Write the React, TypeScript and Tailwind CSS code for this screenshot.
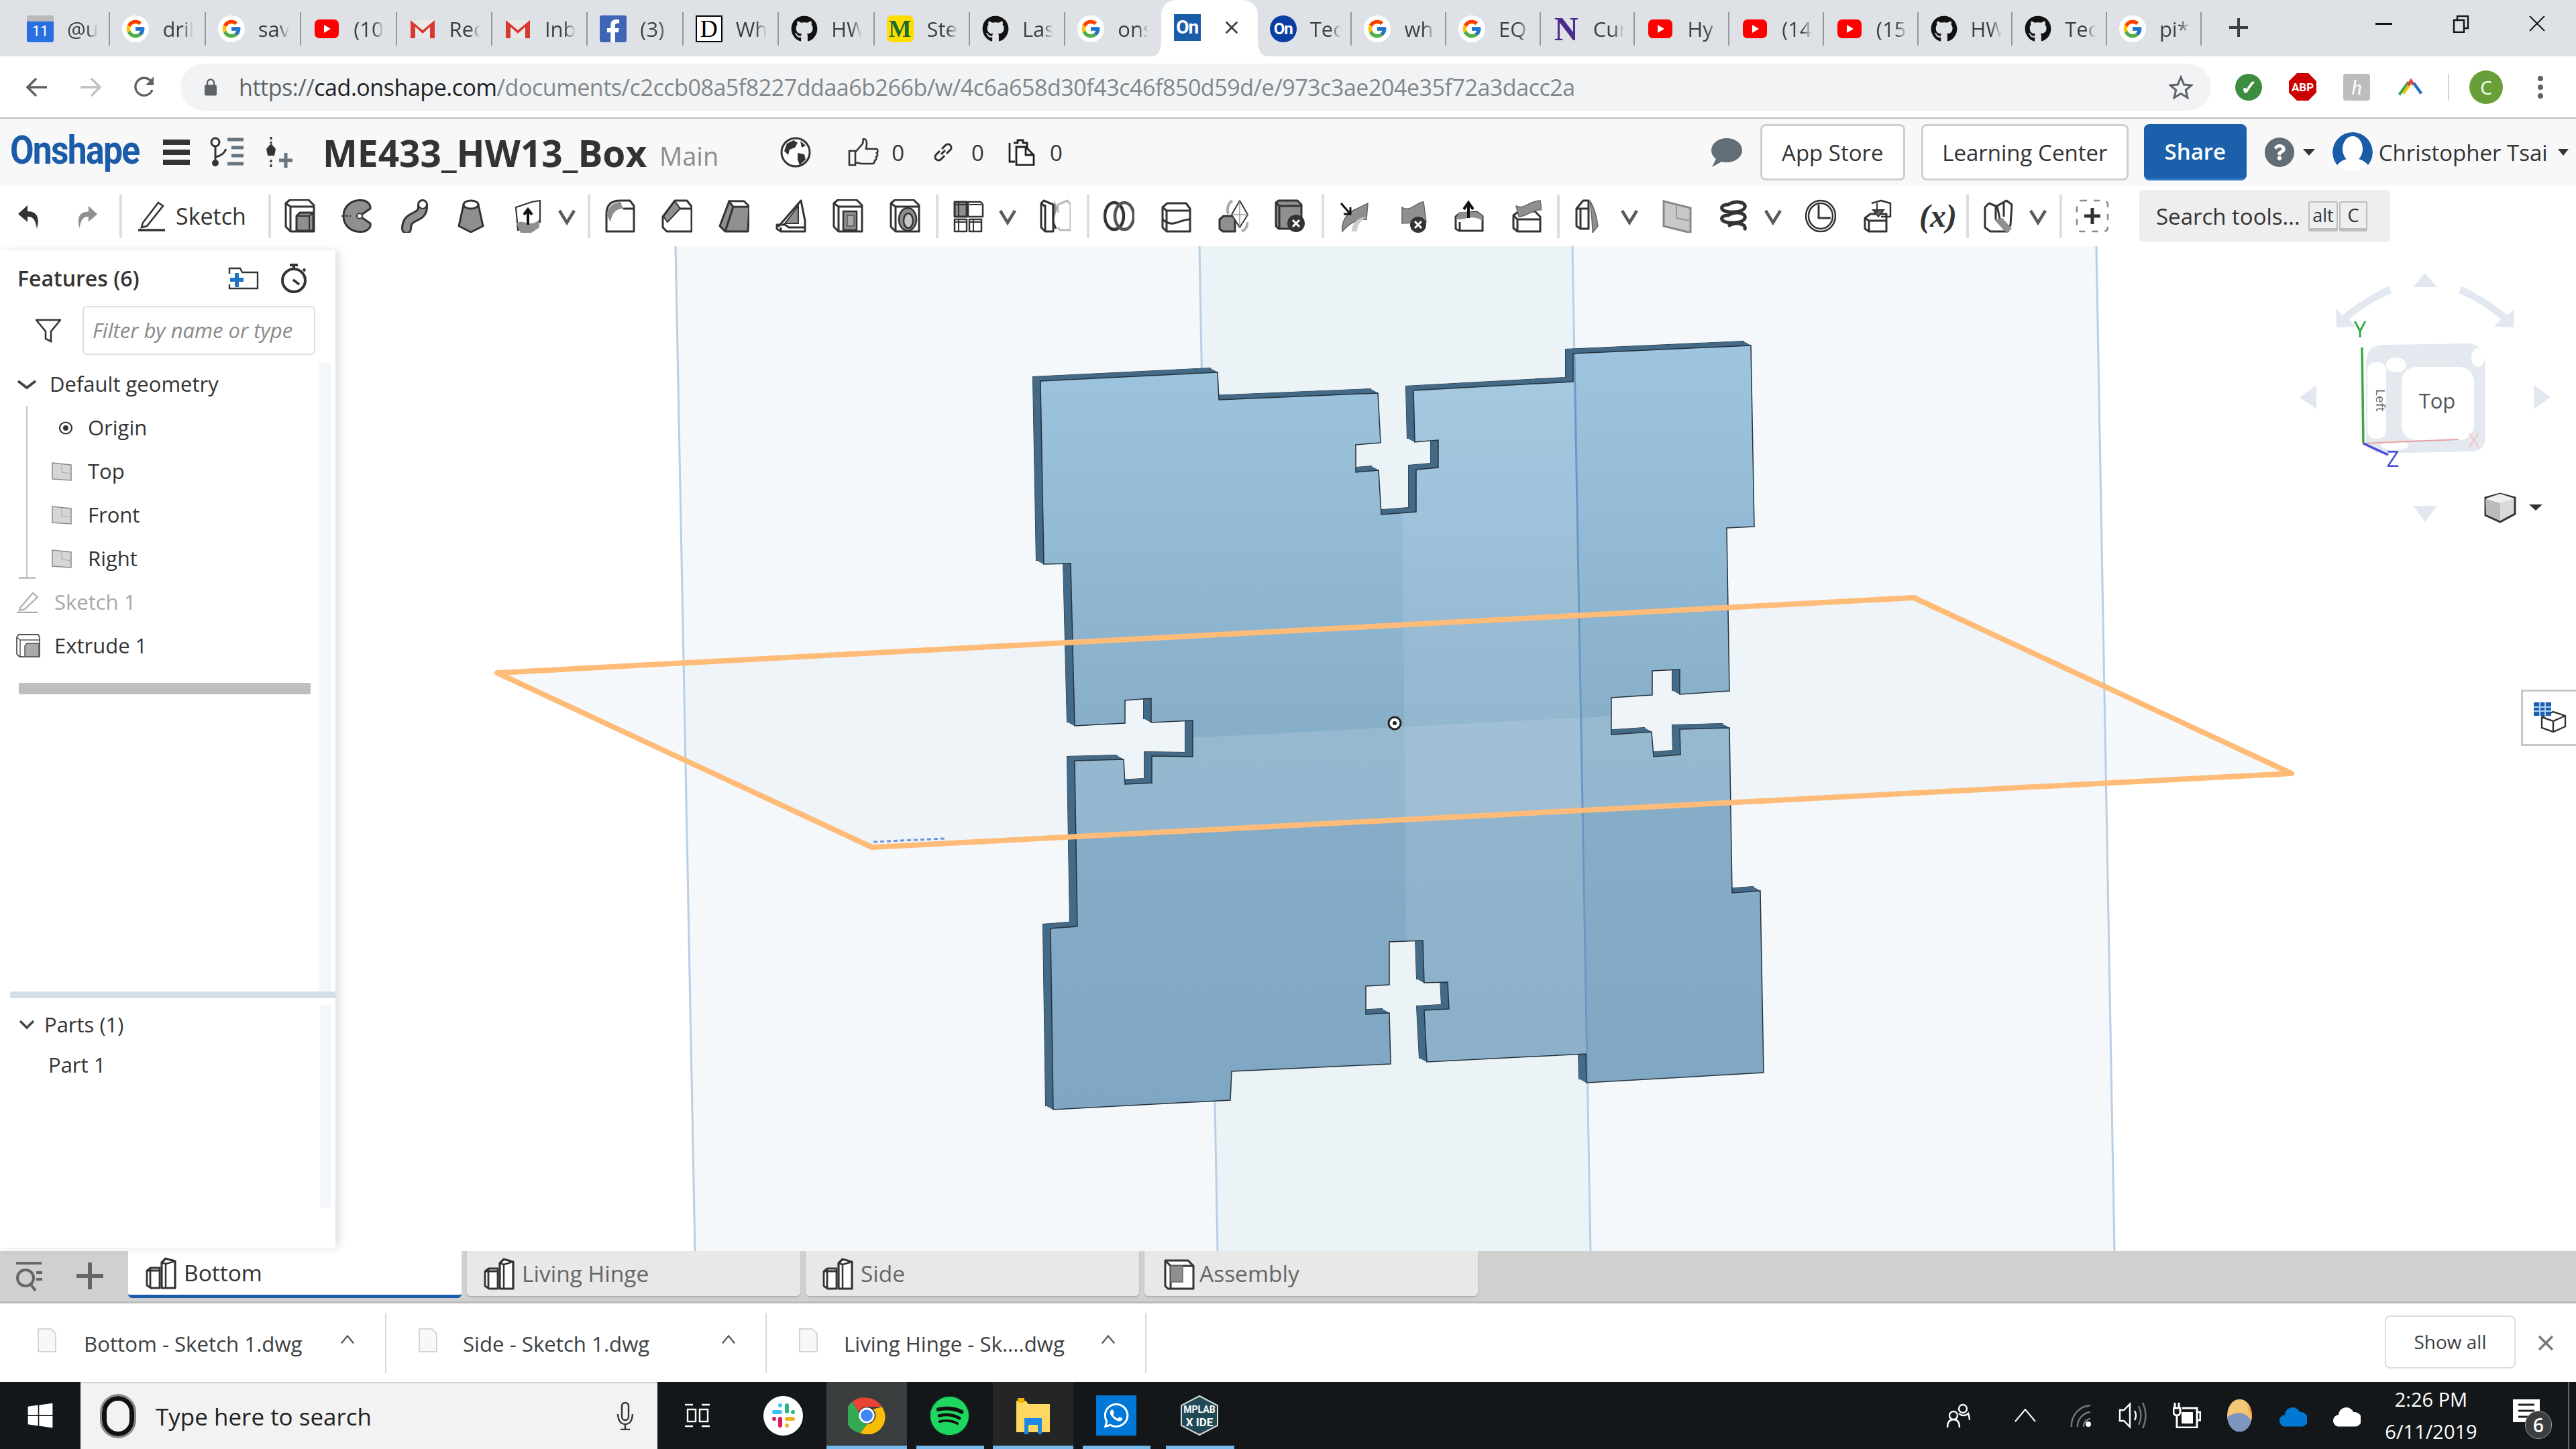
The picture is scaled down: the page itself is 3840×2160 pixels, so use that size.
import React from "react";
import { FcGoogle } from "react-icons/fc";
import { FaGithub, FaFacebookF, FaWindows, FaSpotify, FaWhatsapp, FaQuestion } from "react-icons/fa";

type P = { className?: string };
const st = { fill: "none", stroke: "#333", strokeWidth: 3, strokeLinejoin: "round" as const };
const gr = { fill: "#8f8f8f", stroke: "#333", strokeWidth: 3, strokeLinejoin: "round" as const };
const wh = { fill: "#fff", stroke: "#333", strokeWidth: 3, strokeLinejoin: "round" as const };

/* ---------- favicons ---------- */
const Yt = () => (
  <svg viewBox="0 0 40 40" className="w-10 h-10 shrink-0">
    <rect x="2" y="6" width="36" height="28" rx="7" fill="#f00" />
    <path d="M16 14l10 6-10 6z" fill="#fff" />
  </svg>
);
const G = () => (
  <div className="w-10 h-10 shrink-0 rounded-full bg-white flex items-center justify-center">
    <FcGoogle className="w-[32px] h-[32px]" />
  </div>
);
const Gh = () => <FaGithub className="w-10 h-10 shrink-0 text-[#111]" />;
const Gm = () => (
  <svg viewBox="0 0 40 40" className="w-10 h-10 shrink-0">
    <rect x="2" y="7" width="36" height="27" fill="#e9e9e9" />
    <path d="M2 34V7l18 15L38 7v27h-7V17L20 27 9 17v17z" fill="#d93a2f" />
  </svg>
);
const Cal = () => (
  <div className="w-10 h-10 shrink-0 rounded-[3px] bg-[#2a6fe0] flex flex-col items-center">
    <div className="w-full h-[9px] bg-[#b9b9b9]" />
    <span className="text-white text-[22px] leading-[30px] font-['Roboto',sans-serif]">11</span>
  </div>
);
const Fb = () => (
  <div className="w-10 h-10 shrink-0 rounded-[3px] bg-[#3f66b5] flex items-end justify-center">
    <FaFacebookF className="w-[30px] h-[34px] text-white" />
  </div>
);
const Dd = () => (
  <div className="w-10 h-10 shrink-0 border-2 border-black bg-white flex items-center justify-center font-['Liberation_Serif',serif] text-[36px] leading-none text-black">D</div>
);
const Sten = () => (
  <div className="w-10 h-10 shrink-0 rounded-[8px] bg-[#ffdd00] flex items-center justify-center font-['Liberation_Serif',serif] font-bold text-[36px] leading-none text-[#1d6b2a]">M</div>
);
const OnS = () => (
  <div className="w-10 h-10 shrink-0 bg-[#1a5ca8] flex items-center justify-center overflow-hidden font-['Roboto',sans-serif] font-bold text-[28px] leading-none text-white tracking-[-1px]">On</div>
);
const OnC = () => (
  <div className="w-10 h-10 shrink-0 rounded-full bg-[#0b3ea3] flex items-center justify-center font-['Roboto',sans-serif] font-bold text-[24px] leading-none text-white tracking-[-1px]">On</div>
);
const Nn = () => (
  <div className="w-10 h-10 shrink-0 flex items-center justify-center font-['Liberation_Serif',serif] font-bold text-[50px] leading-none text-[#4b2a8c]">N</div>
);

const tabsA: [React.ReactNode, string][] = [
  [<Cal />, "@u"], [<G />, "dril"], [<G />, "sav"], [<Yt />, "(10"], [<Gm />, "Rec"], [<Gm />, "Inb"],
  [<Fb />, "(3)"], [<Dd />, "Wh"], [<Gh />, "HW"], [<Sten />, "Ste"], [<Gh />, "Las"],
];
const tabsB: [React.ReactNode, string][] = [
  [<OnC />, "Tec"], [<G />, "wh"], [<G />, "EQ"], [<Nn />, "Cur"], [<Yt />, "Hy"], [<Yt />, "(14"], [<Yt />, "(15"],
  [<Gh />, "HW"], [<Gh />, "Tec"], [<G />, "pi*"],
];

function Tab({ icon, label, wide, last }: { icon: React.ReactNode; label: string; wide?: boolean; last?: boolean }) {
  return (
    <div className={`${wide ? "w-[142.4px]" : "w-[140.7px]"} h-[50px] mt-[18px] flex items-center gap-[20px] pl-[18px] ${last ? "" : "border-r-2 border-[#94989d]"}`}>
      {icon}
      <span className="block w-[46px] overflow-hidden whitespace-nowrap text-[31px] leading-[50px] text-[#3c4043] [mask-image:linear-gradient(90deg,#000_65%,transparent)]">{label}</span>
    </div>
  );
}

function TabStrip() {
  return (
    <div className="h-[84px] bg-[#dee1e6] flex shrink-0">
      <div className="w-[22px]" />
      {tabsA.map(([i, l], n) => <Tab key={n} icon={i} label={l} wide />)}
      <Tab icon={<G />} label="ons" wide last />
      <div className="relative w-[144px] h-full bg-white rounded-t-[22px] flex items-center pl-[19px]">
        <svg viewBox="0 0 16 28" className="absolute left-[-16px] bottom-0 w-4 h-7"><path d="M16 0v28H0C10 28 16 22 16 0z" fill="#fff" /></svg>
        <svg viewBox="0 0 16 28" className="absolute right-[-16px] bottom-0 w-4 h-7"><path d="M0 0v28h16C6 28 0 22 0 0z" fill="#fff" /></svg>
        <div className="-mt-[2px]"><OnS /></div>
        <svg viewBox="0 0 24 24" className="w-[22px] h-[22px] ml-[35px] -mt-[2px]"><path d="M3 3l18 18M21 3L3 21" stroke="#3c4043" strokeWidth="3" /></svg>
      </div>
      {tabsB.map(([i, l], n) => <Tab key={n} icon={i} label={l} />)}
      <svg viewBox="0 0 28 28" className="w-7 h-7 ml-[41px] mt-[27px]"><path d="M14 0v28M0 14h28" stroke="#3c4043" strokeWidth="4" /></svg>
      <div className="w-[25px] h-[3px] bg-[#111] ml-[190px] mt-[34px]" />
      <svg viewBox="0 0 25 26" className="w-[25px] h-[26px] ml-[90px] mt-[23px]"><path d="M2 7h15v18H2zM7 7V1h16v18h-6" fill="none" stroke="#111" strokeWidth="2.4" /></svg>
      <svg viewBox="0 0 24 24" className="w-6 h-6 ml-[89px] mt-[23px]"><path d="M1 1l22 22M23 1L1 23" stroke="#111" strokeWidth="1.8" /></svg>
    </div>
  );
}

function AddressBar() {
  return (
    <div className="h-[93px] bg-white border-b-2 border-[#bdbdbd] flex items-center shrink-0 relative">
      <svg viewBox="0 0 32 32" className="w-8 h-8 ml-[39px]"><path d="M31 16H3M15 3L2 16l13 13" fill="none" stroke="#5f6368" strokeWidth="3.4" /></svg>
      <svg viewBox="0 0 32 32" className="w-8 h-8 ml-[48px]"><path d="M1 16h28M17 3l13 13-13 13" fill="none" stroke="#bdc1c6" strokeWidth="3.4" /></svg>
      <svg viewBox="0 0 34 34" className="w-[34px] h-[34px] ml-[47px]"><path d="M29 21A13 13 0 1 1 26 7" fill="none" stroke="#5f6368" strokeWidth="3.4" /><path d="M31 1v13H19z" fill="#5f6368" /></svg>
      <div className="w-[3027px] h-[70px] ml-[37px] rounded-full bg-[#f1f3f4] flex items-center relative">
        <svg viewBox="0 0 20 26" className="w-5 h-[27px] ml-[35px]"><path d="M5 11V7a5 5 0 0 1 10 0v4" fill="none" stroke="#5f6368" strokeWidth="2.4" /><rect x="1" y="10" width="18" height="16" rx="2" fill="#5f6368" /></svg>
        <span className="ml-[32px] text-[34px] leading-none whitespace-nowrap text-[#80868b] font-['Open_Sans',sans-serif] tracking-[-0.46px]">
          <span className="text-[#5f6368]">https://</span><span className="text-[#202124]">cad.onshape.com</span>/documents/c2ccb08a5f8227ddaa6b266b/w/4c6a658d30f43c46f850d59d/e/973c3ae204e35f72a3dacc2a
        </span>
        <svg viewBox="0 0 36 36" className="w-9 h-9 absolute right-[27px] top-[17px]"><path d="M18 3l4.5 11 11.5 1-8.8 7.400 2.800 11.300L18 27.500 7.900 33.700l2.800-11.300L2 15l11.500-1z" fill="none" stroke="#5f6368" strokeWidth="3" /></svg>
      </div>
      <div className="ml-[36px] w-10 h-10 rounded-full bg-[#3d8c40] flex items-center justify-center text-white font-bold text-[30px] leading-none">✓</div>
      <svg viewBox="0 0 41 41" className="w-[41px] h-[41px] ml-[40px]"><path d="M12 0h17l12 12v17L29 41H12L0 29V12z" fill="#c00" /><text x="20.5" y="27" textAnchor="middle" fontSize="17" fontWeight="700" fill="#fff" fontFamily="Roboto">ABP</text></svg>
      <div className="ml-[40px] w-10 h-10 rounded-[4px] bg-[#bdbdbd] flex items-center justify-center text-white italic font-['Liberation_Serif',serif] text-[32px] leading-none">h</div>
      <svg viewBox="0 0 42 30" className="w-[42px] h-[26px] ml-[39px]"><path d="M2 28L18 6" stroke="#34a853" strokeWidth="5" /><path d="M9 26L21 8" stroke="#fbbc05" strokeWidth="5" /><path d="M17 12L22 4l5 7" fill="none" stroke="#ea4335" strokeWidth="5" /><path d="M27 8l13 18" stroke="#1a73c8" strokeWidth="5" /></svg>
      <div className="ml-[35px] w-[2px] h-10 bg-[#d4d4d4]" />
      <div className="ml-[30px] w-[50px] h-[50px] rounded-full bg-[#689f38] flex items-center justify-center text-white text-[28px] leading-none">C</div>
      <svg viewBox="0 0 10 34" className="w-[10px] h-[34px] ml-[51px]"><circle cx="5" cy="4" r="4" fill="#5f6368" /><circle cx="5" cy="17" r="4" fill="#5f6368" /><circle cx="5" cy="30" r="4" fill="#5f6368" /></svg>
    </div>
  );
}

function AppHeader() {
  return (
    <div className="h-[100px] bg-[#f8f8f8] flex items-center shrink-0">
      <span className="ml-[15px] w-[195px] origin-left scale-x-[0.86] text-[#1a5ca8] font-['Roboto',sans-serif] font-bold text-[60px] leading-none tracking-[-2px] -mt-[6px] whitespace-nowrap">Onshape</span>
      <div className="ml-[33px] w-10 h-[38px] flex flex-col justify-between"><div className="h-2 bg-[#333]" /><div className="h-2 bg-[#333]" /><div className="h-2 bg-[#333]" /></div>
      <svg viewBox="0 0 50 46" className="w-[50px] h-[46px] ml-[30px]"><circle cx="8" cy="8" r="6" fill="none" stroke="#333" strokeWidth="3" /><circle cx="8" cy="39" r="5" fill="#333" /><path d="M8 14v20M8 30q12-2 16-12" fill="none" stroke="#333" strokeWidth="3" /><path d="M26 4h24M32 16h18M32 28h18M26 40h24" stroke="#667580" strokeWidth="5" /></svg>
      <svg viewBox="0 0 40 46" className="w-10 h-[46px] ml-[33px]"><path d="M8 0v10M8 34v12" stroke="#333" strokeWidth="3" strokeDasharray="4 3" /><path d="M8 10l7 8-2 10H3L1 18z" fill="#333" /><path d="M30 24v22M20 35h20" stroke="#667580" strokeWidth="5" /></svg>
      <span className="ml-[45px] w-[481px] text-[55px] leading-none font-bold text-[#333] whitespace-nowrap">ME433_HW13_Box</span>
      <span className="ml-[21px] text-[38px] leading-none text-[#8c8c8c] mt-[10px]">Main</span>
      <svg viewBox="0 0 46 46" className="w-[46px] h-[46px] ml-[92px]"><circle cx="23" cy="23" r="21" fill="#fff" stroke="#333" strokeWidth="3" /><path d="M10 10l10-5 6 4-4 7-8 3-2 8-6-6zM26 24l10 2 2 8-9 8-3-8zM30 6l8 7-6 3z" fill="#333" /></svg>
      <svg viewBox="0 0 46 42" className="w-[46px] h-[42px] ml-[55px]"><path d="M2 19h9v21H2zM11 21L22 8l1-7c5 0 6 5 4 15h15c3 0 3 5 1 6 2 2 1 5-1 6 1 2 0 5-2 5 0 3-1 5-4 5H20l-9-2" fill="none" stroke="#333" strokeWidth="2.600" /></svg>
      <span className="ml-[19px] text-[33px] leading-none text-[#333]">0</span>
      <svg viewBox="0 0 30 30" className="w-[30px] h-[30px] ml-[43px]"><path d="M12 18l6-6M10 13l-6 6a5 5 0 0 0 7 7l6-6M20 17l6-6a5 5 0 0 0-7-7l-6 6" fill="none" stroke="#333" strokeWidth="3" /></svg>
      <span className="ml-[27px] text-[33px] leading-none text-[#333]">0</span>
      <svg viewBox="0 0 40 40" className="w-10 h-10 ml-[36px]"><path d="M8 6h6V2h8v4h6v8" fill="none" stroke="#222" strokeWidth="2.800" /><path d="M2 6v28h8M12 12h14l12 12v15H12zM26 12v12h12" fill="#fff" stroke="#222" strokeWidth="2.800" /></svg>
      <span className="ml-[22px] text-[33px] leading-none text-[#333]">0</span>
      <svg viewBox="0 0 48 44" className="w-12 h-11 ml-[965px]"><ellipse cx="25" cy="19" rx="23" ry="18" fill="#616d77" /><path d="M10 30L3 44l18-10z" fill="#616d77" /></svg>
      <div className="ml-[27px] w-[216px] h-[84px] rounded-[8px] bg-white border-[3px] border-[#cfcfcf] flex items-center justify-center text-[33px] leading-none text-[#333]">App Store</div>
      <div className="ml-[24px] w-[309px] h-[84px] rounded-[8px] bg-white border-[3px] border-[#cfcfcf] flex items-center justify-center text-[33px] leading-none text-[#333]">Learning Center</div>
      <div className="ml-[23px] w-[153px] h-[84px] rounded-[8px] bg-[#1c5fab] border-b-[3px] border-[#2d78c8] flex items-center justify-center text-[33px] leading-none font-semibold text-white">Share</div>
      <div className="ml-[27px] w-[44px] h-[44px] rounded-full bg-[#616d77] flex items-center justify-center"><FaQuestion className="w-6 h-6 text-white" /></div>
      <div className="ml-[13px] w-0 h-0 border-x-[9px] border-x-transparent border-t-[10px] border-t-[#333]" />
      <svg viewBox="0 0 60 60" className="w-[60px] h-[60px] ml-[26px]"><defs><clipPath id="av"><circle cx="30" cy="30" r="30" /></clipPath></defs><g clipPath="url(#av)"><circle cx="30" cy="30" r="30" fill="#1a5ca8" /><ellipse cx="30" cy="25" rx="15" ry="19" fill="#fff" /><ellipse cx="30" cy="56" rx="25" ry="17" fill="#fff" /></g></svg>
      <span className="ml-[9px] w-[257px] text-[33px] leading-none text-[#333] whitespace-nowrap">Christopher Tsai</span>
      <div className="ml-[10px] w-0 h-0 border-x-[8px] border-x-transparent border-t-[10px] border-t-[#333]" />
    </div>
  );
}

/* ---------- toolbar icons ---------- */
const Ic = ({ children }: { children: React.ReactNode }) => (
  <svg viewBox="0 0 46 50" className="w-[46px] h-[50px] shrink-0">{children}</svg>
);
const Box = () => (<><path d="M2 6l6-5h28l8 8v39H9l-7-7z" {...wh} /><path d="M2 6l7 5h35M9 11v37" {...st} /></>);
const T = {
  extrude: <Ic><Box /><path d="M18 25l5-5h20v27H18z" {...gr} /><path d="M18 25h19v22M37 25l6-5" {...st} strokeWidth={2} /></Ic>,
  revolve: <Ic><path d="M34 2C16-1 3 10 3 25s13 26 31 23c8-3 10-8 9-12l-16-11 16-11c1-5-3-10-9-12z" {...gr} /><circle cx="27" cy="25" r="4" {...wh} strokeWidth={2} /><path d="M0 25h14" stroke="#333" strokeWidth="2" strokeDasharray="4 2" /></Ic>,
  sweep: <Ic><path d="M36 8c2 24-24 12-24 36" fill="none" stroke="#333" strokeWidth="16" strokeLinecap="round" /><path d="M36 8c2 24-24 12-24 36" fill="none" stroke="#8f8f8f" strokeWidth="10" strokeLinecap="round" /><ellipse cx="36" cy="8" rx="6" ry="6" {...wh} strokeWidth={2} /></Ic>,
  loft: <Ic><path d="M12 8L5 40l18 9 18-9-7-32z" {...gr} /><ellipse cx="23" cy="8" rx="11" ry="6" {...wh} /></Ic>,
  thicken: <Ic><path d="M5 12l24-8 12-2v32L8 46z" {...wh} strokeWidth={2.200} /><path d="M6 36c10-8 20 8 34-6v12l-12 8H12z" fill="#8f8f8f" /><path d="M23 38V16m-6 7l6-8 6 8" fill="none" stroke="#111" strokeWidth="4" /></Ic>,
  fillet: <Ic><path d="M3 48V22Q3 2 24 2h14l6 8v38z" {...wh} /><path d="M4 24Q5 6 24 4l4 10Q12 14 9 34z" fill="#8f8f8f" /><path d="M28 14h16" {...st} /></Ic>,
  chamfer: <Ic><path d="M2 26L20 2h18l7 9v37H8l-6-6z" {...wh} /><path d="M3 26l6 8L28 14 20 3z" fill="#8f8f8f" stroke="#333" strokeWidth="2" /><path d="M28 14h17" {...st} /></Ic>,
  draft: <Ic><path d="M2 40L16 3h22l8 8-2 37H10z" {...gr} /><path d="M16 3l6 8h24M22 11L10 48" {...st} /><path d="M16 3h22l8 8H22z" fill="#fff" stroke="#333" strokeWidth="2.500" /></Ic>,
  rib: <Ic><path d="M2 38v6l6 4h36V32L38 2l-7 8-26 30z" {...wh} /><path d="M14 36L34 10v26z" fill="#8f8f8f" stroke="#333" strokeWidth="2" /><path d="M2 38h12l6 4h24M8 48v-6" {...st} /></Ic>,
  shell: <Ic><Box /><path d="M16 18h20v28H16z" fill="#8f8f8f" stroke="#333" strokeWidth="2.500" /><path d="M22 24h10v16H22z" fill="#aaa" stroke="#555" strokeWidth="1.500" /></Ic>,
  hole: <Ic><Box /><ellipse cx="27" cy="30" rx="13" ry="17" fill="#8f8f8f" stroke="#333" strokeWidth="2.500" /><ellipse cx="28" cy="32" rx="7" ry="11" fill="#c8c8c8" stroke="#333" strokeWidth="2.500" /></Ic>,
  pattern: <Ic><path d="M2 4h18v22H2z" {...gr} /><path d="M22 4h19l3 4v18H22zM2 30h18v18H2zM24 30h18v18H24z" {...wh} strokeWidth={2.500} /><path d="M2 8h18M24 8h18M2 34h18M24 34h18M8 4v22M8 30v18M30 30v18" {...st} strokeWidth={2} /></Ic>,
  mirror: <Ic><path d="M2 6l4-4 14 6v40H8l-6-6z" {...wh} /><path d="M8 8v40M2 6l6 5" {...st} /><path d="M21 2l5 10-5 20z" fill="#8f8f8f" /><path d="M27 20V8l14-6 5 6v38H30l-3-4" fill="none" stroke="#bbb" strokeWidth="3" /><path d="M20 8v26l4 10" {...st} /></Ic>,
  boolean: <Ic><ellipse cx="16" cy="25" rx="14" ry="20" fill="none" stroke="#333" strokeWidth="4.500" /><ellipse cx="31" cy="25" rx="14" ry="20" fill="none" stroke="#555" strokeWidth="4.500" /></Ic>,
  split: <Ic><path d="M3 12l7-6h28l6 8v34H9l-6-6z" {...wh} /><path d="M3 12l6 5h35M9 17v31" {...st} /><path d="M3 30c16 14 24 0 41 0" {...st} /></Ic>,
  transform: <Ic><path d="M3 30l6-5h17v23H8l-5-4z" {...gr} /><path d="M33 2l12 21-12 19-12-19z" {...wh} strokeWidth={2} /><path d="M33 2v40M21 23h24" fill="none" stroke="#999" strokeWidth="1.500" /><path d="M16 22c-3-8 0-16 6-20M36 48c5-2 9-8 9-14" fill="none" stroke="#aaa" strokeWidth="4" /></Ic>,
  delPart: <Ic><path d="M2 5l4-3h28l6 6v36H6l-4-4z" {...gr} /><path d="M2 5l5 5h33M7 10v34" {...st} /><circle cx="32" cy="36" r="13" fill="#333" /><path d="M27 31l10 10M37 31L27 41" stroke="#fff" strokeWidth="3" /></Ic>,
  moveFace: <Ic><path d="M4 48C2 30 14 18 26 14l16-8-2 24c-14 0-24 4-36 18z" fill="#8f8f8f" stroke="#666" strokeWidth="1.500" /><path d="M18 48c0-14 10-20 22-22-8 6-14 12-14 22z" fill="#ccc" /><path d="M2 6l14 16m0-10v10H6" fill="none" stroke="#111" strokeWidth="3" /></Ic>,
  repFace: <Ic><path d="M8 12c12 8 22-8 32-8l4 30-36 2z" fill="#8f8f8f" stroke="#666" strokeWidth="1.500" /><circle cx="32" cy="38" r="12" fill="#333" /><path d="M27 33l10 10M37 33L27 43" stroke="#fff" strokeWidth="3" /></Ic>,
  offset: <Ic><path d="M3 26l6-5 25-2 9 6v22H8l-5-3z" {...wh} /><path d="M3 28c8 8 20-8 40 4v-8l-9-5H9z" fill="#8f8f8f" /><path d="M22 28V6m-7 9l7-10 7 10" fill="none" stroke="#111" strokeWidth="4" /><path d="M9 47V34" {...st} /></Ic>,
  boundary: <Ic><path d="M4 24l8-6h24l8 8v22H10l-6-5z" {...wh} /><path d="M4 24l6 6h34M10 30v18" {...st} /><path d="M8 10C20 16 28 2 44 2l2 14c-12-2-22 10-34 10z" fill="#8f8f8f" stroke="#666" strokeWidth="1.500" /></Ic>,
  wrap: <Ic><path d="M2 14L12 2h8v42H8l-6-4z" {...wh} /><path d="M2 14h18M8 14v30" {...st} /><path d="M22 2c6 10 10 22 12 38l-8 10c0-16-2-30-4-48z" fill="#8f8f8f" stroke="#666" strokeWidth="1.500" /></Ic>,
  plane: <Ic><path d="M3 3l40 10v37L3 40z" fill="#c8c8c8" stroke="#888" strokeWidth="3" /><path d="M22 8v20l20 4" fill="none" stroke="#999" strokeWidth="2" /></Ic>,
  helix: <Ic><path d="M14 8c14-8 30-2 24 6-5 6-24 6-30 3S4 8 14 8zM14 24c14-8 30-2 24 6-5 6-24 6-30 3s-4-9 6-9zM14 40c14-8 30-2 24 6" fill="none" stroke="#333" strokeWidth="5" /></Ic>,
  clock: <Ic><ellipse cx="23" cy="25" rx="22" ry="23" {...st} strokeWidth={2.500} /><ellipse cx="23" cy="25" rx="18" ry="19" {...st} strokeWidth={2.500} /><path d="M20 8v20h18" {...st} /></Ic>,
  sub: <Ic><path d="M4 28l8-6h24v26H10l-6-4z" {...wh} /><path d="M4 28l6 4h26M10 32v16" {...st} /><path d="M14 6l14-4 14 4v20H28" {...st} strokeWidth={2.500} /><path d="M22 6v14m-6-4h16l-8 10z" fill="#666" stroke="#333" strokeWidth="2" /></Ic>,
  sheet: <Ic><path d="M2 12l6-6 10 4v20l16 18H10l-8-6z" {...wh} /><path d="M20 10l14-8 8 6-2 30-4 10-10-10z" {...wh} /><path d="M30 4v22" {...st} /><path d="M16 30l12-2 14 16-8 6z" fill="#8f8f8f" /></Ic>,
};
const Chev = () => (
  <svg viewBox="0 0 26 30" className="w-[26px] h-[30px] -ml-[17px] -mr-[4px] shrink-0"><path d="M2 7l11 18L24 7" fill="none" stroke="#5a5a5a" strokeWidth="4.500" /></svg>
);
const Kbd = ({ children, className }: { children: string } & P) => (
  <div className={`h-[45px] flex items-center justify-center rounded-[3px] border-2 border-b-[5px] border-[#bdbdbd] text-[27px] leading-none text-[#333] ${className}`}>{children}</div>
);

function Toolbar() {
  return (
    <div className="h-[90px] bg-white flex items-center shrink-0">
      <svg viewBox="0 0 36 40" className="w-9 h-10 ml-[25px]"><path d="M16 4L2 17l14 12v-8c8 0 12 4 14 18 4-14 2-26-14-26z" fill="#333" /></svg>
      <svg viewBox="0 0 36 40" className="w-[34px] h-10 ml-[52px]"><path d="M20 4l14 13-14 12v-8c-8 0-12 4-14 18C2 25 4 13 20 13z" fill="#8f8f8f" /></svg>
      <div className="w-1 h-[65px] bg-[#ddd] ml-[31px]" />
      <svg viewBox="0 0 43 46" className="w-[43px] h-[46px] ml-[22px]"><path d="M9 33L32 3l7 5-24 30-8 2z" fill="#fff" stroke="#333" strokeWidth="2.600" /><path d="M2 44h40" stroke="#333" strokeWidth="3.600" /></svg>
      <span className="ml-[15px] w-[104px] text-[34px] leading-none text-[#333] whitespace-nowrap">Sketch</span>
      <div className="w-1 h-[65px] bg-[#ddd] ml-[34px]" />
      <div className="ml-[20px] flex items-center gap-[39px]">{T.extrude}{T.revolve}{T.sweep}{T.loft}{T.thicken}<Chev /></div>
      <div className="w-1 h-[65px] bg-[#ddd] ml-[22px]" />
      <div className="ml-[21px] flex items-center gap-[39px]">{T.fillet}{T.chamfer}{T.draft}{T.rib}{T.shell}{T.hole}</div>
      <div className="w-1 h-[65px] bg-[#ddd] ml-[23px]" />
      <div className="ml-[22px] flex items-center gap-[39px]">{T.pattern}<Chev />{T.mirror}</div>
      <div className="w-1 h-[65px] bg-[#ddd] ml-[24px]" />
      <div className="ml-[21px] flex items-center gap-[39px]">{T.boolean}{T.split}{T.transform}{T.delPart}</div>
      <div className="w-1 h-[65px] bg-[#ddd] ml-[24px]" />
      <div className="ml-[23px] flex items-center gap-[39px]">{T.moveFace}{T.repFace}{T.offset}{T.boundary}</div>
      <div className="w-1 h-[65px] bg-[#ddd] ml-[23px]" />
      <div className="ml-[23px] flex items-center gap-[39px]">
        {T.wrap}<Chev />{T.plane}{T.helix}<Chev />{T.clock}{T.sub}
        <span className="w-[50px] text-center font-['Liberation_Serif',serif] italic font-bold text-[48px] leading-none text-[#333] whitespace-nowrap">(x)</span>
      </div>
      <div className="w-1 h-[65px] bg-[#ddd] ml-[20px]" />
      <div className="ml-[22px] flex items-center gap-[39px]">{T.sheet}<Chev /></div>
      <div className="w-1 h-[65px] bg-[#ddd] ml-[23px]" />
      <svg viewBox="0 0 50 50" className="w-[50px] h-[50px] ml-[20px]"><rect x="2" y="2" width="46" height="46" rx="6" fill="none" stroke="#888" strokeWidth="2.500" strokeDasharray="9 10" /><path d="M25 13v24M13 25h24" stroke="#333" strokeWidth="5" /></svg>
      <div className="ml-[45px] w-[374px] h-[78px] rounded-[6px] bg-[#eeeeee] flex items-center pl-[25px]">
        <span className="w-[216px] text-[33px] leading-none text-[#333] whitespace-nowrap">Search tools...</span>
        <Kbd className="ml-[11px] w-[44px]">alt</Kbd>
        <Kbd className="ml-[2px] w-[42px]">C</Kbd>
      </div>
    </div>
  );
}

/* ---------- feature panel ---------- */
const PlaneIc = () => (
  <svg viewBox="0 0 30 28" className="w-[30px] h-[28px] shrink-0"><path d="M1 1l28 3v23L1 25z" fill="#d6d6d6" stroke="#8a8a8a" strokeWidth="1.500" /><path d="M15 3v12l14 2" fill="none" stroke="#aaa" strokeWidth="1" /></svg>
);
const rowText = "text-[31px] leading-none text-[#333] whitespace-nowrap";

function Panel() {
  return (
    <div className="relative w-[500px] mt-[6px] mb-[5px] bg-white shadow-[6px_0_12px_rgba(0,0,0,0.12)] z-10 flex flex-col shrink-0">
      <div className="absolute left-[476px] top-[167px] w-[17px] h-[938px] bg-[#f4f7fa]" />
      <div className="absolute left-[477px] top-[1125px] w-[16px] h-[302px] bg-[#f4f7fa]" />
      <div className="h-[83px] flex items-center pl-[26px]">
        <span className="w-[180px] text-[32px] leading-none font-semibold text-[#333] whitespace-nowrap">Features (6)</span>
        <svg viewBox="0 0 46 34" className="w-[46px] h-[34px] ml-[134px]"><path d="M2 10V2h16l3 6h23v24H2v-6" fill="none" stroke="#333" strokeWidth="2.400" /><path d="M13 9v21M3 19h20" stroke="#1f74c4" strokeWidth="6" /></svg>
        <svg viewBox="0 0 40 44" className="w-10 h-11 ml-[32px]"><ellipse cx="20" cy="25" rx="17" ry="17" fill="none" stroke="#333" strokeWidth="4" /><path d="M14 2h12M20 2v6M34 8l3 3" stroke="#333" strokeWidth="4" /><path d="M19 24l9 7" stroke="#333" strokeWidth="3.500" /></svg>
      </div>
      <div className="h-[73px] flex items-center">
        <svg viewBox="0 0 38 36" className="w-[38px] h-9 ml-[53px]"><path d="M1 2h36L23 19v15l-8-4V19z" fill="none" stroke="#333" strokeWidth="2.600" /></svg>
        <div className="ml-[32px] w-[347px] h-[73px] rounded-[6px] border-2 border-[#dedede] bg-white flex items-center pl-[13px]">
          <span className="text-[31px] leading-none italic text-[#8a8a8a] whitespace-nowrap">Filter by name or type</span>
        </div>
      </div>
      <div className="h-[65px] mt-[11px] flex items-center">
        <svg viewBox="0 0 30 16" className="w-[30px] h-4 ml-[25px]"><path d="M2 3l13 10L28 3" fill="none" stroke="#444" strokeWidth="4" /></svg>
        <span className={`ml-[19px] ${rowText}`}>Default geometry</span>
      </div>
      <div className="relative">
        <div className="absolute left-[39px] top-0 h-[256px] w-[2px] bg-[#c4c4c4]" />
        <div className="absolute left-[28px] top-[255px] h-[3px] w-[25px] bg-[#c4c4c4]" />
        <div className="h-[65px] flex items-center">
          <svg viewBox="0 0 20 20" className="w-5 h-5 ml-[88px]"><ellipse cx="10" cy="10" rx="9" ry="8.500" fill="none" stroke="#333" strokeWidth="2.200" /><circle cx="10" cy="10" r="4" fill="#333" /></svg>
          <span className={`ml-[23px] ${rowText}`}>Origin</span>
        </div>
        <div className="h-[65px] flex items-center"><div className="ml-[77px]"><PlaneIc /></div><span className={`ml-[24px] ${rowText}`}>Top</span></div>
        <div className="h-[65px] flex items-center"><div className="ml-[77px]"><PlaneIc /></div><span className={`ml-[24px] ${rowText}`}>Front</span></div>
        <div className="h-[65px] flex items-center"><div className="ml-[77px]"><PlaneIc /></div><span className={`ml-[24px] ${rowText}`}>Right</span></div>
      </div>
      <div className="h-[65px] flex items-center">
        <svg viewBox="0 0 32 32" className="w-8 h-8 ml-[25px]"><path d="M5 24L24 2l7 6-19 18-8 2z" fill="#fff" stroke="#aaa" strokeWidth="2" /><path d="M0 31h31" stroke="#aaa" strokeWidth="2.500" /></svg>
        <span className="ml-[24px] text-[31px] leading-none text-[#a8a8a8] whitespace-nowrap">Sketch 1</span>
      </div>
      <div className="h-[65px] flex items-center">
        <svg viewBox="0 0 36 35" className="w-9 h-[35px] ml-[24px]"><path d="M1 5l3-4h29l2 4v29H5l-4-4z" fill="#fff" stroke="#555" strokeWidth="1.800" /><path d="M1 5l5 4h29M6 9v25" fill="none" stroke="#555" strokeWidth="1.500" /><path d="M13 18l3-4h18v20H13z" fill="#aaa" stroke="#555" strokeWidth="1.500" /></svg>
        <span className={`ml-[21px] ${rowText}`}>Extrude 1</span>
      </div>
      <div className="ml-[28px] mt-[23px] w-[435px] h-[17px] bg-[#bfbfbf]" />
      <div className="flex-1" />
      <div className="ml-[15px] h-[10px] bg-[#d2dfe9]" />
      <div className="h-[48px] mt-[15px] flex items-center">
        <svg viewBox="0 0 24 16" className="w-6 h-4 ml-[28px]"><path d="M2 3l10 10L22 3" fill="none" stroke="#444" strokeWidth="3.500" /></svg>
        <span className="ml-[14px] text-[31px] leading-none text-[#333] whitespace-nowrap">Parts (1)</span>
      </div>
      <div className="h-[48px] mt-[12px] flex items-center">
        <span className="ml-[72px] text-[31px] leading-none text-[#333] whitespace-nowrap">Part 1</span>
      </div>
      <div className="h-[249px]" />
    </div>
  );
}

/* ---------- 3D view ---------- */
const face =
  "M1551 568L1815 555L1817 596L2054 586L2058 660L2021 663L2021 704L2055 701L2059 767L2111 763L2111 700L2144 697L2144 656L2109 659L2107 582L2345 569L2345 527L2610 515L2615 785L2574 787L2578 1030L2504 1035L2504 998L2463 1000L2463 1036L2402 1040L2402 1095L2462 1091L2465 1128L2505 1125L2504 1087L2578 1085L2582 1331L2624 1328L2629 1599L2365 1614L2364 1571L2127 1583L2123 1506L2160 1504L2158 1464L2123 1465L2121 1402L2071 1404L2071 1468L2036 1470L2036 1512L2071 1510L2073 1586L1836 1597L1834 1640L1570 1654L1566 1384L1606 1381L1602 1134L1675 1132L1677 1169L1717 1167L1717 1127L1778 1128L1778 1074L1716 1077L1716 1041L1677 1044L1677 1078L1602 1082L1596 840L1556 841Z";
const sweep = [11, 10, 9, 8, 7, 6, 5, 4, 3, 2, 1];

function View3D() {
  return (
    <svg viewBox="500 367 3340 1498" className="absolute inset-0 w-[3340px] h-[1498px]">
      <defs>
        <linearGradient id="faceG" x1="0" y1="0" x2="0" y2="1">
          <stop offset="0" stopColor="#9ec5df" />
          <stop offset="0.5" stopColor="#87afca" />
          <stop offset="1" stopColor="#7fa7c3" />
        </linearGradient>
        <clipPath id="faceClip"><path d={face} /></clipPath>
      </defs>
      {/* vertical planes */}
      <path d="M1007 367L2344 367L2371 1865L1036 1865Z" fill="#dce7ef" fillOpacity="0.3" />
      <path d="M1788 367L3125 367L3152 1865L1815 1865Z" fill="#dce7ef" fillOpacity="0.3" />
      {/* horizontal plane */}
      <path d="M741 1003L2853 891L3416 1153L1300 1263Z" fill="#dce7ef" fillOpacity="0.25" />
      <g stroke="#b9cfe6" strokeWidth="3" fill="none">
        <path d="M1007 367L1036 1865" />
        <path d="M1788 367L1815 1865" />
        <path d="M2344 367L2371 1865" />
        <path d="M3125 367L3152 1865" />
      </g>
      {/* extruded part */}
      <path d={face} transform="translate(-11 -6)" fill="#3d5d76" stroke="#1d2b36" strokeWidth="2" />
      {sweep.map((o) => (
        <path key={o} d={face} transform={`translate(${-o} ${-o * 0.55})`} fill="#456b88" stroke="#456b88" strokeWidth="1" />
      ))}
      <path d={face} fill="url(#faceG)" />
      <g clipPath="url(#faceClip)">
        <path d="M2087 400L2100 1800L2372 1800L2345 400Z" fill="#fff" fillOpacity="0.1" />
        <path d="M1500 1114L2700 1052L2700 1190L1500 1253Z" fill="#fff" fillOpacity="0.13" />
        <path d="M2344 367L2371 1865" stroke="#6a97c4" strokeWidth="3" />
      </g>
      <path d={face} fill="none" stroke="#24323d" strokeWidth="1.500" />
      {/* origin */}
      <circle cx="2079" cy="1078" r="9" fill="#fff" stroke="#222" strokeWidth="3" />
      <circle cx="2079" cy="1078" r="3" fill="#222" />
      {/* orange plane outline */}
      <path d="M741 1003L2853 891L3416 1153L1300 1263Z" fill="none" stroke="#ffbb78" strokeWidth="8" strokeLinejoin="round" />
      <path d="M1302 1255L1408 1250" stroke="#6f8fe0" strokeWidth="3" strokeDasharray="6 4" />

      {/* view cube */}
      <g fill="#e2e8ef">
        <path d="M3615 407L3633 428H3597Z" />
        <path d="M3428 592L3453 574V610Z" />
        <path d="M3802 592L3777 574V610Z" />
        <path d="M3615 778L3633 754H3597Z" />
        <path d="M3483 488L3482 460L3492 470C3512 452 3538 438 3561 426L3565 437C3540 448 3520 460 3502 476L3512 487Z" />
        <path d="M3747 488L3748 460L3738 470C3718 452 3692 438 3669 426L3665 437C3690 448 3710 460 3728 476L3718 487Z" />
      </g>
      <path d="M3527 540Q3527 516 3552 514L3680 512Q3703 514 3705 540L3705 654Q3703 672 3685 673L3550 676Q3530 674 3527 660Z" fill="#e3e9ef" />
      <rect x="3580" y="547" width="108" height="109" rx="22" fill="#fff" />
      <rect x="3529" y="540" width="28" height="114" rx="12" fill="#fff" />
      <ellipse cx="3572" cy="544" rx="15" ry="11" fill="#fff" />
      <ellipse cx="3694" cy="533" rx="10" ry="14" fill="#fff" />
      <ellipse cx="3570" cy="664" rx="20" ry="7" fill="#fff" />
      <text x="3633" y="609" textAnchor="middle" fontSize="31" fill="#555" fontFamily="Open Sans">Top</text>
      <text x="3543" y="598" textAnchor="middle" fontSize="19" fill="#666" fontFamily="Open Sans" transform="rotate(90 3543 597)">Left</text>
      <path d="M3521 518L3523 661" stroke="#3aa83f" strokeWidth="3.500" />
      <path d="M3523 661L3665 655" stroke="#e9a0a0" strokeWidth="2" />
      <path d="M3523 661L3560 678" stroke="#4a4ae0" strokeWidth="3.500" />
      <text x="3518" y="503" textAnchor="middle" fontSize="33" fill="#27a635" fontFamily="Open Sans">Y</text>
      <text x="3688" y="667" textAnchor="middle" fontSize="30" fill="#f3c7c7" fontFamily="Open Sans">X</text>
      <text x="3567" y="696" textAnchor="middle" fontSize="33" fill="#4a4ae0" fontFamily="Open Sans">Z</text>
      <path d="M3705 742L3727 736L3749 742L3749 766L3727 778L3705 768Z" fill="#d8dadc" stroke="#333" strokeWidth="3" />
      <path d="M3705 744L3727 750L3727 776L3706 767Z" fill="#b9bbbd" />
      <path d="M3706 743L3727 736L3748 743L3727 750Z" fill="#eef0ef" />
      <path d="M3770 752H3790L3780 761Z" fill="#333" />
    </svg>
  );
}

function MainArea() {
  return (
    <div className="relative flex-1 flex bg-white min-h-0">
      <Panel />
      <div className="relative flex-1 overflow-hidden">
        <View3D />
        <div className="absolute right-0 top-[661px] w-[82px] h-[84px] bg-white border-[3px] border-r-0 border-[#c8c8c8] flex items-center justify-center">
          <svg viewBox="0 0 50 48" className="w-[50px] h-[48px]"><path d="M13 23l17-8 18 6v16l-18 8-17-6zM13 23l17 6 18-8M30 29v16" fill="#fff" stroke="#333" strokeWidth="2.400" /><rect x="1" y="1" width="26" height="20" fill="#1c5fab" /><path d="M1 8h26M1 14h26M10 1v20M18 1v20" stroke="#a9d0f0" strokeWidth="2" /></svg>
        </div>
      </div>
    </div>
  );
}

/* ---------- document tabs ---------- */
const PartIc = () => (
  <svg viewBox="0 0 50 48" className="w-[50px] h-[48px] shrink-0"><path d="M2 20l5-4h14v30H8l-6-4zM7 16v30M2 20h19" {...wh} strokeWidth={2.800} /><path d="M24 8l6-6 14 4v40H24z" {...wh} strokeWidth={3.200} /><path d="M24 8l6 2 14-4M30 10v36" {...st} strokeWidth={2.500} /></svg>
);
function DocTab({ label, active, icon, className }: { label: string; active?: boolean; icon: React.ReactNode; className: string }) {
  return (
    <div className={`w-[497px] rounded-b-[6px] flex items-center ${active ? "bg-white border-b-[5px] border-[#1a5ca8] h-[70px] text-[#333]" : "bg-[#e8e8e8] h-[67px] text-[#666] shadow-[0_2px_2px_rgba(0,0,0,0.15)]"} ${className}`}>
      {icon}
      <span className="ml-[7px] text-[33.5px] leading-none whitespace-nowrap">{label}</span>
    </div>
  );
}
function DocTabs() {
  return (
    <div className="h-[78px] bg-[#d0d0d0] border-b-[3px] border-[#bbbbbb] flex items-start shrink-0">
      <svg viewBox="0 0 42 46" className="w-[42px] h-[46px] ml-[22px] mt-[14px]"><circle cx="16" cy="26" r="12" fill="none" stroke="#666" strokeWidth="4" /><path d="M24 36l7 9M2 4h38M32 18h9M32 28h9" stroke="#666" strokeWidth="4" /></svg>
      <svg viewBox="0 0 40 40" className="w-10 h-10 ml-[50px] mt-[17px]"><path d="M20 0v40M0 20h40" stroke="#666" strokeWidth="6" /></svg>
      <div className="ml-[37px] flex gap-[8px]">
        <DocTab label="Bottom" active icon={<PartIc />} className="pl-[26px]" />
        <DocTab label="Living Hinge" icon={<PartIc />} className="pl-[25px]" />
        <DocTab label="Side" icon={<PartIc />} className="pl-[25px]" />
        <DocTab label="Assembly" className="pl-[29px]" icon={
          <svg viewBox="0 0 46 48" className="w-[46px] h-[48px] shrink-0"><path d="M2 4h34l8 8v34H6l-4-4z" {...wh} /><path d="M2 4l8 8h34M10 12v34" {...st} /><path d="M10 12h18v24H10z" fill="#8f8f8f" stroke="#666" strokeWidth="1.500" /></svg>
        } />
      </div>
    </div>
  );
}

/* ---------- download shelf ---------- */
function FileIc({ className }: P) {
  return <svg viewBox="0 0 28 36" className={`w-7 h-9 shrink-0 -mt-[8px] ${className}`}><path d="M1 1h19l7 7v27H1z" fill="#f8f8f8" stroke="#c9c9c9" strokeWidth="1.500" /></svg>;
}
function UpIc({ className }: P) {
  return <svg viewBox="0 0 24 16" className={`w-[22px] h-4 shrink-0 -mt-[10px] ${className}`}><path d="M2 14L12 2l10 12" fill="none" stroke="#555" strokeWidth="2.400" /></svg>;
}
const dlText = "mt-[5px] text-[31.2px] leading-none text-[#3c4043] whitespace-nowrap";
function Shelf() {
  return (
    <div className="h-[117px] bg-white flex items-center shrink-0">
      <div className="flex">
        <div className="w-[576px] h-[90px] flex items-center border-r-2 border-[#dadada] shrink-0">
          <FileIc className="ml-[56px]" />
          <span className={`ml-[41px] w-[322px] ${dlText}`}>Bottom - Sketch 1.dwg</span>
          <UpIc className="ml-[60px]" />
        </div>
        <div className="w-[567px] h-[90px] flex items-center border-r-2 border-[#dadada] shrink-0">
          <FileIc className="ml-[48px]" />
          <span className={`ml-[38px] w-[282px] ${dlText}`}>Side - Sketch 1.dwg</span>
          <UpIc className="ml-[103px]" />
        </div>
        <div className="w-[566px] h-[90px] flex items-center border-r-2 border-[#dadada] shrink-0">
          <FileIc className="ml-[48px]" />
          <span className={`ml-[39px] w-[335px] ${dlText}`}>Living Hinge - Sk....dwg</span>
          <UpIc className="ml-[48px]" />
        </div>
      </div>
      <div className="ml-auto -mt-[3px] w-[195px] h-[79px] rounded-[8px] border-2 border-[#dcdcdc] flex items-center justify-center text-[28px] leading-none font-medium text-[#3c4043]">Show all</div>
      <svg viewBox="0 0 24 24" className="w-6 h-6 ml-[33px] mr-[33px]"><path d="M2 2l20 20M22 2L2 22" stroke="#777" strokeWidth="3.400" /></svg>
    </div>
  );
}

/* ---------- taskbar ---------- */
const Chrome = () => (
  <svg viewBox="0 0 60 60" className="w-[56px] h-[56px]">
    <path d="M30 2a28 28 0 0 1 24.200 14H30a14 14 0 0 0-13 9L7 8A28 28 0 0 1 30 2z" fill="#ea4335" />
    <path d="M7 8l13 22a14 14 0 0 0 11 14l-11 14A28 28 0 0 1 7 8z" fill="#34a853" />
    <path d="M54.200 16A28 28 0 0 1 20 58l11-14a14 14 0 0 0 9-24z" fill="#fbbc05" />
    <circle cx="30" cy="30" r="11" fill="#4285f4" stroke="#fff" strokeWidth="3" />
  </svg>
);
const Slack = () => (
  <div className="w-[59px] h-[59px] rounded-full bg-white flex items-center justify-center">
    <svg viewBox="0 0 40 40" className="w-[40px] h-[40px]">
      <g strokeWidth="6" strokeLinecap="round" fill="none">
        <path d="M15 5v0M6 15h9" stroke="#36c5f0" />
        <path d="M25 14V5M34 15v0" stroke="#2eb67d" />
        <path d="M25 25h9M25 35v0" stroke="#ecb22e" />
        <path d="M15 25v10M6 25v0" stroke="#e01e5a" />
      </g>
    </svg>
  </div>
);
function Underline({ className }: P) {
  return <div className={`absolute bottom-0 h-[5px] bg-[#76b9ed] ${className}`} />;
}
function Taskbar() {
  return (
    <div className="relative h-[100px] bg-[#14171a] flex items-center shrink-0 text-white">
      <div className="w-[120px] flex justify-center"><FaWindows className="w-10 h-[42px] text-white" /></div>
      <div className="w-[860px] h-full bg-[#f2f2f2] border-t-2 border-[#d0d0d0] flex items-center">
        <div className="ml-[32px] w-12 h-[60px] rounded-full border-[7px] border-[#111] outline-[3px] outline-[#888]" />
        <span className="ml-[32px] text-[35px] leading-none text-[#222] whitespace-nowrap">Type here to search</span>
        <svg viewBox="0 0 26 42" className="w-[26px] h-[42px] ml-[365px]"><rect x="8" y="1" width="10" height="26" rx="5" fill="none" stroke="#333" strokeWidth="2.400" /><path d="M2 18q1 15 11 15t11-15M13 33v8M6 41h14" fill="none" stroke="#333" strokeWidth="2.400" /></svg>
      </div>
      <svg viewBox="0 0 40 40" className="w-10 h-10 ml-[40px]"><path d="M1 4h12M1 36h12M38 4h-12M38 36h-12" stroke="#fff" strokeWidth="2.400" /><rect x="5" y="11" width="12" height="18" fill="none" stroke="#fff" strokeWidth="2.400" /><rect x="23" y="11" width="12" height="18" fill="none" stroke="#fff" strokeWidth="2.400" /></svg>
      <div className="ml-[78px]"><Slack /></div>
      <div className="ml-[35px] w-[120px] h-full bg-[#3a3d3d] flex items-center justify-center"><Chrome /></div>
      <div className="ml-[34px] w-[59px] h-[59px] rounded-full bg-[#1ed760] flex items-center justify-center"><FaSpotify className="w-[59px] h-[59px] text-[#1ed760] bg-[#111] rounded-full" /></div>
      <div className="ml-[35px] w-[120px] h-full bg-[#242626] flex items-center justify-center">
        <svg viewBox="0 0 54 56" className="w-[54px] h-[56px]"><path d="M2 6h14l4 5h32v42H2z" fill="#fdd860" /><rect x="4" y="2" width="10" height="7" fill="#f4b400" /><path d="M14 32h26v24h-6V42h-14v14h-6z" fill="#1e88e5" /></svg>
      </div>
      <div className="ml-[34px] w-[60px] h-[60px] bg-[#0078d7] flex items-center justify-center"><FaWhatsapp className="w-[42px] h-[42px] text-white" /></div>
      <svg viewBox="0 0 62 60" className="w-[62px] h-[60px] ml-[63px]"><path d="M31 1l27 14v30L31 59 4 45V15z" fill="#214a56" stroke="#ddd" strokeWidth="2" /><text x="31" y="26" textAnchor="middle" fontSize="14" fontWeight="700" fill="#fff" fontFamily="Roboto">MPLAB</text><text x="31" y="46" textAnchor="middle" fontSize="17" fontWeight="700" fill="#fff" fontFamily="Roboto">X IDE</text></svg>
      <Underline className="left-[1232px] w-[120px]" />
      <Underline className="left-[1366px] w-[101px]" />
      <Underline className="left-[1480px] w-[120px]" />
      <Underline className="left-[1614px] w-[101px]" />
      <Underline className="left-[1738px] w-[102px]" />
      <div className="ml-auto flex items-center pr-[54px]">
        <svg viewBox="0 0 36 38" className="w-9 h-[38px]"><g fill="none" stroke="#fff" strokeWidth="2.400"><circle cx="25" cy="9" r="6" /><circle cx="11" cy="19" r="6" /><path d="M2 37c0-8 3-12 9-12s9 4 9 12M19 16c4 4 10 4 14 0 1 3 2 5 2 10" /></g></svg>
        <svg viewBox="0 0 32 20" className="w-8 h-5 ml-[66px]"><path d="M1 19L16 1l15 18" fill="none" stroke="#fff" strokeWidth="2" /></svg>
        <svg viewBox="0 0 32 34" className="w-8 h-[34px] ml-[51px]"><path d="M2 34a30 30 0 0 1 28-32M11 34a21 21 0 0 1 19-22M20 34a11 11 0 0 1 10-12" fill="none" stroke="#777" strokeWidth="2.400" /><circle cx="27" cy="30" r="4" fill="#fff" /></svg>
        <svg viewBox="0 0 42 40" className="w-[42px] h-10 ml-[40px]"><path d="M2 12h6l9-9v34l-9-9H2z" fill="none" stroke="#fff" strokeWidth="2.400" /><path d="M24 13q4 7 0 14" fill="none" stroke="#fff" strokeWidth="2.400" /><path d="M30 6q7 14 0 28M36 1q9 19 0 38" fill="none" stroke="#777" strokeWidth="2.400" /></svg>
        <svg viewBox="0 0 42 38" className="w-[42px] h-[38px] ml-[39px]"><path d="M3 0v8M9 0v8M1 8h10v6a5 5 0 0 1-10 0zM6 19v18h30V8H14M36 14h5v12h-5" fill="none" stroke="#fff" strokeWidth="3" /><rect x="13" y="14" width="17" height="17" fill="#fff" /></svg>
        <svg viewBox="0 0 38 50" className="w-[37px] h-[50px] ml-[39px]"><defs><clipPath id="sun"><ellipse cx="19" cy="25" rx="19" ry="25" /></clipPath></defs><g clipPath="url(#sun)"><rect width="38" height="50" fill="#f4c777" /><path d="M0 27c14-8 28-10 38 8v15H0z" fill="#7c96bf" /><path d="M30 8l8 10v12z" fill="#ef9a3c" /></g></svg>
        <svg viewBox="0 0 42 34" className="w-[41px] h-[34px] ml-[41px]"><path d="M10 34a9 9 0 0 1-2-18 12 12 0 0 1 23-4 10 10 0 0 1 3 22z" fill="#0078d4" /></svg>
        <svg viewBox="0 0 42 34" className="w-[41px] h-[34px] ml-[39px]"><path d="M10 34a9 9 0 0 1-2-18 12 12 0 0 1 23-4 10 10 0 0 1 3 22z" fill="#fff" /></svg>
        <div className="ml-[37px] w-[136px] flex flex-col items-center text-[29px] leading-[48px] whitespace-nowrap">
          <span>2:26 PM</span>
          <span>6/11/2019</span>
        </div>
        <div className="relative ml-[54px] w-10 h-[34px] bg-white -mt-[14px]">
          <svg viewBox="0 0 40 34" className="w-10 h-[34px]"><path d="M8 8h24M8 17h24M8 26h18" stroke="#222" strokeWidth="3" /></svg>
          <div className="absolute left-[18px] top-[17px] w-10 h-[42px] rounded-full bg-[#3b3d3f] border border-[#999] flex items-center justify-center text-[28px] leading-none font-semibold text-white">6</div>
        </div>
      </div>
      <div className="absolute left-[3828px] top-0 w-[2px] h-full bg-[#666]" />
    </div>
  );
}

export default function App() {
  return (
    <div className="w-[3840px] h-[2160px] flex flex-col overflow-hidden bg-white font-['Open_Sans','Noto_Sans',sans-serif]">
      <TabStrip />
      <AddressBar />
      <AppHeader />
      <Toolbar />
      <MainArea />
      <DocTabs />
      <Shelf />
      <Taskbar />
    </div>
  );
}
